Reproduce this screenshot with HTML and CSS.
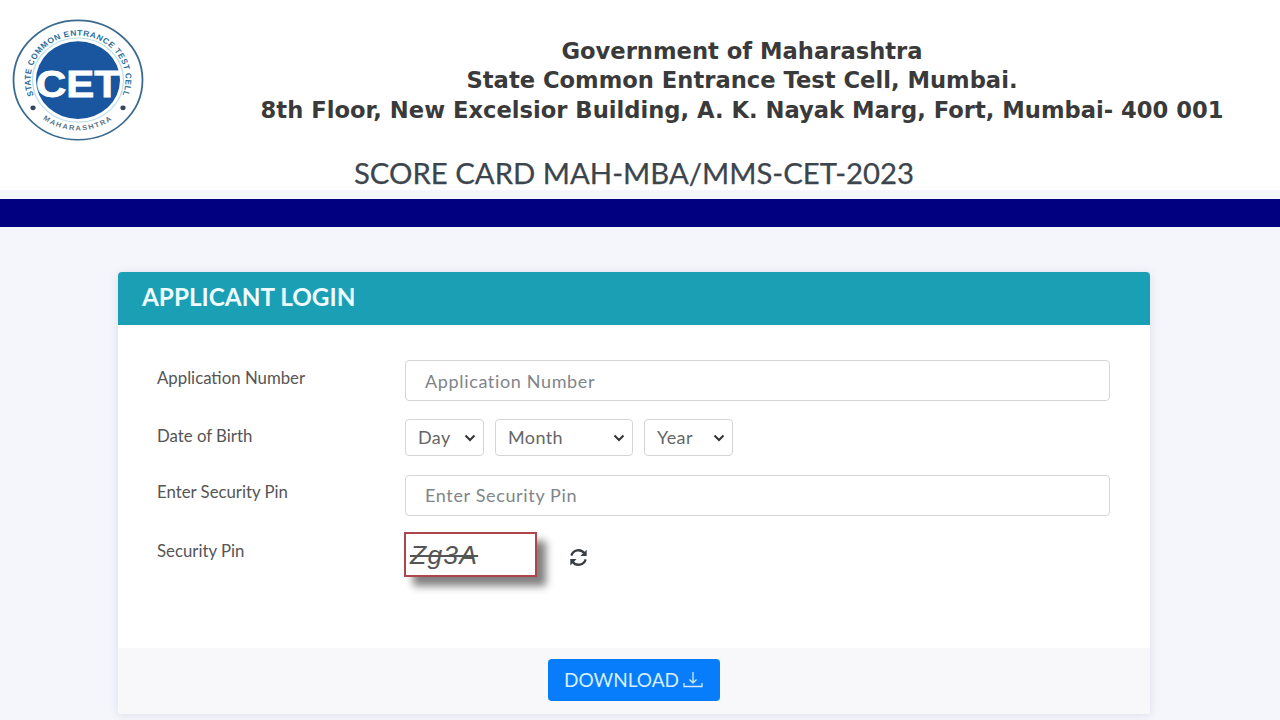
FILE: index.html
```html
<!DOCTYPE html>
<html lang="en">
<head>
<meta charset="utf-8">
<title>Score Card MAH-MBA/MMS-CET-2023</title>
<link rel="stylesheet" href="styles.css">
</head>
<body>
<header class="masthead">
  <div class="brand-row">
    <svg class="logo" width="132" height="122" viewBox="0 0 132 122" aria-label="CET logo">
      <defs>
        <path id="arcTop" d="M 22.700 85 A 47.500 47.500 0 1 1 109.300 85"/>
        <path id="arcBottom" d="M 24 101.500 A 56 56 0 0 0 108 101.500"/>
      </defs>
      <g transform="matrix(1 0 0 .925 0 0)">
        <circle cx="66" cy="66" r="64.500" fill="#fff" stroke="#3a6a90" stroke-width="1.800"/>
        <circle cx="66" cy="66" r="45.500" fill="none" stroke="#bfe0e6" stroke-width="1.200"/>
        <circle cx="66" cy="66" r="42" fill="#1a559f"/>
        <text class="logo-ring"><textPath href="#arcTop" startOffset="50%" text-anchor="middle">STATE COMMON ENTRANCE TEST CELL</textPath></text>
        <text class="logo-ring small"><textPath href="#arcBottom" startOffset="50%" text-anchor="middle">MAHARASHTRA</textPath></text>
        <circle cx="21" cy="96" r="2.600" fill="#33485f"/>
        <circle cx="111" cy="96" r="2.600" fill="#33485f"/>
      </g>
      <text class="logo-cet" x="24" y="78" textLength="84" lengthAdjust="spacingAndGlyphs">CET</text>
    </svg>
    <div class="org">
      <div>Government of Maharashtra</div>
      <div>State Common Entrance Test Cell, Mumbai.</div>
      <div>8th Floor, New Excelsior Building, A. K. Nayak Marg, Fort, Mumbai- 400 001</div>
    </div>
  </div>
  <h1 class="score-title">SCORE CARD MAH-MBA/MMS-CET-2023</h1>
</header>
<div class="navy-bar"></div>
<main class="card">
  <h2 class="card-head">APPLICANT LOGIN</h2>
  <form class="card-body">
    <div class="row row-first">
      <label class="lbl">Application Number</label>
      <div class="fake-input">Application Number</div>
    </div>
    <div class="row row-dob">
      <label class="lbl">Date of Birth</label>
      <div class="selects">
        <div class="sel sel-day">Day<svg class="chev" width="12" height="8" viewBox="0 0 12 8"><path d="M1.500 1.500 6 6l4.500-4.500" fill="none" stroke="#333" stroke-width="2"/></svg></div>
        <div class="sel sel-month">Month<svg class="chev" width="12" height="8" viewBox="0 0 12 8"><path d="M1.500 1.500 6 6l4.500-4.500" fill="none" stroke="#333" stroke-width="2"/></svg></div>
        <div class="sel sel-year">Year<svg class="chev" width="12" height="8" viewBox="0 0 12 8"><path d="M1.500 1.500 6 6l4.500-4.500" fill="none" stroke="#333" stroke-width="2"/></svg></div>
      </div>
    </div>
    <div class="row row-pin">
      <label class="lbl">Enter Security Pin</label>
      <div class="fake-input">Enter Security Pin</div>
    </div>
    <div class="row row-captcha">
      <label class="lbl">Security Pin</label>
      <div class="captcha-wrap">
        <div class="captcha">Zg3A</div>
        <svg class="refresh" width="21" height="21" viewBox="0 0 20 20"><g fill="none" stroke="#3a3f44" stroke-width="2.200"><path d="M3.200 8.200A7 7 0 0 1 15.600 6"/><path d="M16.800 11.800A7 7 0 0 1 4.400 14"/></g><path d="M17.800 2.500v6h-6z" fill="#3a3f44"/><path d="M2.200 17.500v-6h6z" fill="#3a3f44"/></svg>
      </div>
    </div>
  </form>
  <div class="card-foot">
    <button class="download" type="button">DOWNLOAD
      <svg width="20" height="18" viewBox="0 0 20 18"><g fill="none" stroke="#cfeaff" stroke-width="1.300"><path d="M10 2v11M6.500 9.500 10 13l3.500-3.500"/><path d="M1 13v3.500h18V13"/></g></svg>
    </button>
  </div>
</main>
</body>
</html>
```
FILE: styles.css
```css
* { box-sizing: border-box; }
html, body { margin: 0; height: 720px; overflow: hidden; }
body { background: #f5f5fc; font-family: Lato, "Liberation Sans", sans-serif; color: #444; }
.masthead { background: #fff; height: 190px; }
.brand-row { display: flex; height: 145px; }
.logo { flex: none; margin: 19px 0 0 12px; }
.org {
  margin-left: 116px; padding-top: 36.500px; width: 964px; text-align: center;
  font-family: "DejaVu Sans", sans-serif; font-weight: 700; font-size: 22.650px; line-height: 29.500px;
  color: #3a3a3a; white-space: nowrap;
}
.score-title {
  margin: 0; text-align: center; width: 1268px;
  font-family: Lato, sans-serif; font-weight: 400; font-size: 29.300px; line-height: 40px; color: #3c454d;
  -webkit-text-stroke: .25px #3c454d; padding-top: 8px; white-space: nowrap;
}
.navy-bar { height: 28px; margin-top: 9px; background: #000080; }
.card {
  width: 1032px; margin: 45px 0 0 118px; height: 442px; background: #fff; border-radius: 4px;
  box-shadow: 0 1px 10px rgba(60, 60, 90, .12); display: flex; flex-direction: column; overflow: hidden;
}
.card-head {
  margin: 0; height: 53px; padding-left: 24px; background: #1b9fb4; color: #eefcff;
  font-size: 24.300px; font-weight: 700; line-height: 50px;
}
.card-body { flex: 1; padding: 35px 39px 0; }
.row { display: flex; }
.lbl { width: 248px; flex: none; font-size: 16.800px; color: #555; line-height: 36px; }
.row-first { height: 59px; }
.row-dob { height: 56px; }
.row-dob .lbl { line-height: 34px; }
.row-pin { height: 57px; }
.row-pin .lbl { line-height: 33px; }
.row-pin .fake-input { line-height: 39px; }
.fake-input {
  width: 705px; height: 41px; background: #fff; border: 1px solid #d5d5d8; border-radius: 4px;
  padding-left: 19px; font-size: 18px; line-height: 41px; color: #80858a; letter-spacing: .65px;
}
.selects { display: flex; gap: 11px; }
.sel {
  height: 37px; background: #fff; border: 1px solid #d5d5d8; border-radius: 4px; display: flex;
  align-items: center; justify-content: space-between; padding: 0 7px 2px 12px; font-size: 18px; color: #666; letter-spacing: .4px;
}
.sel-day { width: 79px; }
.sel-month { width: 138px; }
.sel-year { width: 89px; }
.chev { margin-top: 2px; }
.captcha-wrap { display: flex; align-items: center; gap: 31px; }
.captcha {
  width: 133px; height: 45px; background: #fff; border: 2px solid #ad464c; margin-left: -1px;
  box-shadow: 9px 9px 8px #808080; font-family: "Liberation Sans", sans-serif; font-style: italic; font-size: 26.500px;
  line-height: 43px; padding-left: 4px; color: #555; letter-spacing: 1.200px;
  text-decoration: line-through; text-decoration-thickness: 2px;
}
.row-captcha .lbl { line-height: 37px; }
.refresh { margin-top: 6px; }
.card-foot { height: 66px; background: #f8f8fa; display: flex; justify-content: center; padding-top: 11px; }
.download {
  width: 172px; height: 42px; background: #087dfb; border: 0; border-radius: 4px; color: #d5eeff;
  font-family: Lato, sans-serif; font-size: 19px; display: flex; align-items: center; justify-content: center; gap: 4px; padding: 0 0 2px; margin-right: 1px;
}
.logo-ring { font-family: "Liberation Sans", sans-serif; font-weight: 700; font-size: 8.500px; fill: #2c6f9e; letter-spacing: .55px; }
.logo-ring.small { font-size: 7.500px; fill: #5a7488; letter-spacing: 1.500px; }
.logo-cet { font-family: "Liberation Sans", sans-serif; font-weight: 700; font-size: 37px; fill: #fff; stroke: #fff; stroke-width: .8; }
```
